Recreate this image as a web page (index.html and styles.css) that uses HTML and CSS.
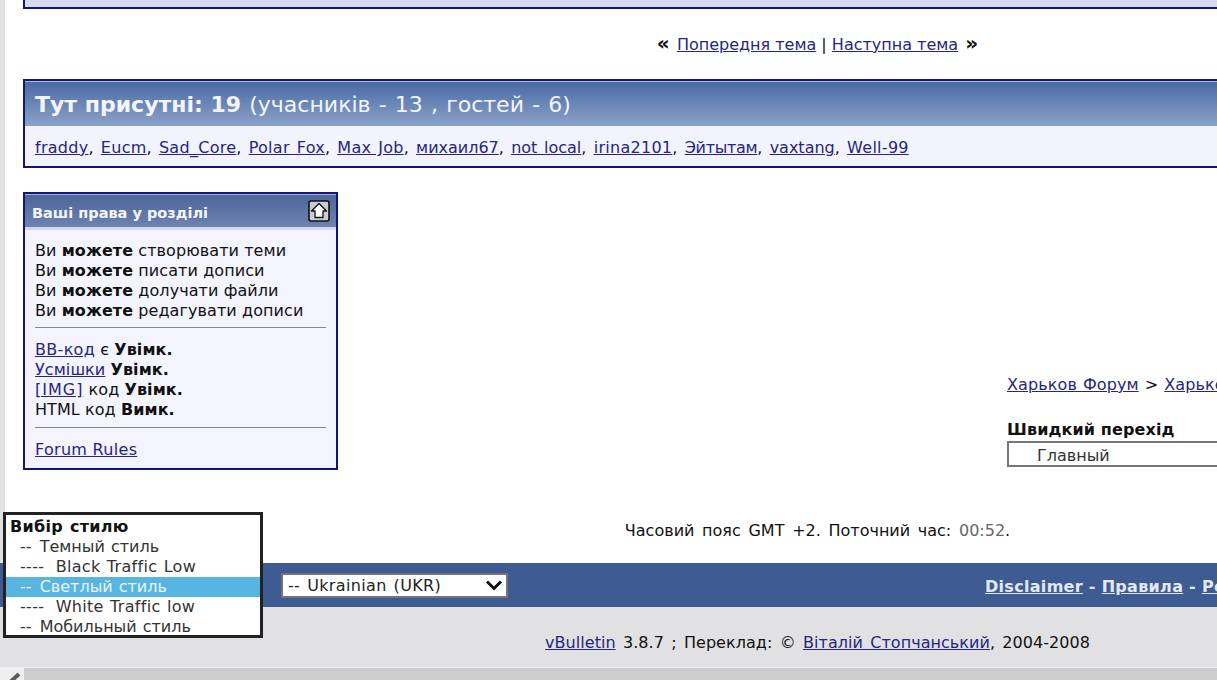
FILE: index.html
```html
<!DOCTYPE html>
<html lang="uk">
<head>
<meta charset="utf-8">
<title>Харьков Форум</title>
<link rel="stylesheet" href="styles.css">
</head>
<body>
<div class="viewport">
  <div class="sheet">
    <div class="top-box"></div>
    <div class="thread-nav"><b class="quote">«</b> <a href="#">Попередня тема</a> | <a href="#">Наступна тема</a> <b class="quote">»</b></div>

    <section class="online">
      <h2 class="online-head"><b>Тут присутні: 19</b> (учасників - 13 , гостей - 6)</h2>
      <div class="online-body"><a href="#">fraddy</a>, <a href="#">Eucm</a>, <a href="#">Sad_Core</a>, <a href="#">Polar Fox</a>, <a href="#">Max Job</a>, <a href="#" class="cyr">михаил67</a>, <a href="#" class="cyr">not local</a>, <a href="#">irina2101</a>, <a href="#" class="cyr-tight">Эйтытам</a>, <a href="#" class="cyr">vaxtang</a>, <a href="#">Well-99</a></div>
    </section>

    <div class="columns">
      <section class="rights">
        <div class="rights-head">
          <span class="rights-title">Ваші права у розділі</span>
          <svg class="collapse" width="22" height="22" viewBox="0 0 22 22" aria-hidden="true">
            <rect x="1" y="1" width="20" height="20" rx="2" fill="#c9ccd4" stroke="#111" stroke-width="1.6"/>
            <path d="M11 3.500 L18.500 11 H15 V17.500 H7 V11 H3.500 Z" fill="#fff" stroke="#111" stroke-width="1.3" stroke-linejoin="round"/>
          </svg>
        </div>
        <div class="rights-body">
          <div>Ви <b>можете</b> створювати теми</div>
          <div>Ви <b>можете</b> писати дописи</div>
          <div>Ви <b>можете</b> долучати файли</div>
          <div>Ви <b>можете</b> редагувати дописи</div>
          <hr class="rule-first">
          <div><a href="#" class="latin">BB-код</a> є <b>Увімк.</b></div>
          <div><a href="#">Усмішки</a> <b>Увімк.</b></div>
          <div><a href="#" class="latin-wide">[IMG]</a> код <b>Увімк.</b></div>
          <div>HTML код <b>Вимк.</b></div>
          <hr class="rule-second">
          <div><a href="#" class="latin">Forum Rules</a></div>
        </div>
      </section>
      <div class="side">
        <div class="crumbs"><a href="#">Харьков Форум</a> &gt; <a href="#">Харьков</a></div>
        <div class="jump-title">Швидкий перехід</div>
        <div class="jump-select">Главный</div>
      </div>
    </div>

    <div class="timezone">Часовий пояс GMT +2. Поточний час: <span class="time">00:52</span>.</div>

    <div class="footer-bar">
      <div class="lang-select"><span class="lang-text">-- Ukrainian (UKR)</span>
        <svg width="18" height="12" viewBox="0 0 18 12" aria-hidden="true"><path d="M2 2.500 L9 9.500 L16 2.500" fill="none" stroke="#111" stroke-width="3"/></svg>
      </div>
      <div class="footer-links"><a href="#">Disclaimer</a> - <a href="#">Правила</a> - <a href="#">Реклама</a></div>
    </div>
    <div class="copyright"><a href="#">vBulletin</a> 3.8.7 ; Переклад: © <a href="#">Віталій Стопчанський</a>, 2004-2008</div>
  </div>

  <div class="style-menu">
    <div class="opt head">Вибір стилю</div>
    <div class="opt sub"><span class="dash">--</span> Темный стиль</div>
    <div class="opt sub latin"><span class="dash long">----</span> Black Traffic Low</div>
    <div class="opt sub active"><span class="dash">--</span> Светлый стиль</div>
    <div class="opt sub latin"><span class="dash long">----</span> White Traffic low</div>
    <div class="opt sub"><span class="dash">--</span> Мобильный стиль</div>
  </div>

  <div class="scrollbar">
    <div class="scroll-btn"><svg width="24" height="13" viewBox="0 0 24 13" aria-hidden="true"><path d="M19 4 L8 14" fill="none" stroke="#5c5c5c" stroke-width="4"/></svg></div>
  </div>
</div>
</body>
</html>
```
FILE: styles.css
```css
* { box-sizing: border-box; }
html, body { margin: 0; padding: 0; height: 100%; overflow: hidden; }
body { font-family: "DejaVu Sans", Verdana, sans-serif; font-size: 16px; color: #111; background: #e1e1e3; }
a { color: #262680; text-decoration: underline; }
.viewport { position: relative; width: 1217px; height: 680px; overflow: hidden; display: flex; flex-direction: column; }
.sheet { flex: 1; min-height: 0; margin-left: 5px; width: 1607px; background: #fff; display: flex; flex-direction: column; }
.top-box { margin-left: 18px; width: 1589px; height: 9px; background: #d6dae9; border: 2px solid #14147a; border-top: 0; }
.thread-nav { margin-left: 18px; width: 1589px; margin-top: 24px; height: 20px; line-height: 20px; text-align: center; }
.quote { font-size: 20px; line-height: 20px; margin: 0 2px; }
.online { margin: 26px 0 0 18px; width: 1589px; height: 89px; border: 2px solid #14147a; background: #f2f3fd; }
.online-head { margin: 0; height: 45px; padding: 0 10px; font-size: 22px; font-weight: normal; line-height: 45px; word-spacing: 1.2px; color: #f3f5fb; background: linear-gradient(#4a6aa5, #8ba3c9); border-top: 1px solid #a8b8dc; }
.online-head b { word-spacing: 0; }
.online-body { padding: 10px 10px 0; line-height: 24px; letter-spacing: .28px; word-spacing: 1.6px; }
.online-body .cyr { letter-spacing: 0; }
.online-body .cyr-tight { letter-spacing: -.3px; }
.columns { margin: 24px 0 0 18px; display: flex; align-items: flex-start; width: 1589px; }
.rights { width: 315px; height: 278px; border: 2px solid #14147a; background: #f3f4fe; }
.rights-head { height: 36px; padding: 0 6px 0 7px; display: flex; align-items: center; justify-content: space-between; color: #f4f5fa; font-weight: bold; font-size: 14.5px; background: linear-gradient(#4c6599, #6d83b0); border-top: 1px solid #a4b2d6; border-bottom: 3px solid #d3d8ee; }
.rights-title { padding-top: 3px; }
.rights-body { padding: 11px 10px 0; line-height: 20px; letter-spacing: .08px; }
.rights-body hr { height: 1px; border: 0; background: #888; }
.rights-body .rule-first { margin: 6px 0 12px; }
.rights-body .rule-second { margin: 7px 0 12px; }
.latin { letter-spacing: .3px; }
.latin-wide { letter-spacing: 1px; }
.side { margin-left: 669px; padding-top: 181px; white-space: nowrap; }
.crumbs { height: 24px; line-height: 24px; letter-spacing: .1px; word-spacing: .8px; }
.jump-title { margin-top: 23px; height: 20px; line-height: 20px; font-weight: bold; letter-spacing: .12px; }
.jump-select { margin-top: 1px; width: 300px; height: 26px; line-height: 20px; padding: 3px 0 0 28px; border: 2px solid #777; color: #333; }
.timezone { margin: 51px 0 0 18px; width: 1589px; height: 20px; line-height: 20px; text-align: center; word-spacing: 2.6px; }
.time { color: #666; }
.footer-bar { margin-top: 22px; height: 44px; margin-left: -5px; padding-left: 281px; display: flex; align-items: center; background: #3e5c92; position: relative; width: 1612px; }
.lang-select { width: 227px; height: 25px; display: flex; align-items: center; justify-content: space-between; padding: 0 3px 0 5px; background: #fff; border: 2px solid #72757d; color: #222; }
.lang-text { padding-top: 1px; letter-spacing: .35px; word-spacing: 1.5px; }
.footer-links { margin-left: 477px; padding-top: 2px; color: #e4e8f2; font-weight: bold; white-space: nowrap; letter-spacing: .3px; }
.footer-links a { color: #e4e8f2; }
.copyright { flex: 1; margin-left: -5px; width: 1612px; text-align: center; padding: 26px 0 0 23px; line-height: 20px; background: #e1e1e3; word-spacing: 2.2px; letter-spacing: .04px; }
.style-menu { position: absolute; left: 3px; top: 512px; width: 260px; height: 126px; padding: 2px 0 0; background: #fff; border: 3px solid #222; overflow: hidden; line-height: 20px; color: #333; word-spacing: 1px; }
.opt { height: 20px; white-space: nowrap; padding-left: 4px; }
.opt.sub { padding-left: 14px; }
.opt.head { font-weight: bold; color: #111; letter-spacing: .3px; }
.opt.active { background: #58b4e0; color: #eaf6fc; }
.dash { margin-right: 2px; }
.dash.long { margin-right: 5px; }
.scrollbar { flex: none; height: 13px; background: #cdcdcd; border-top: 1px solid #f0f0f0; display: flex; }
.scroll-btn { width: 24px; height: 12px; background: #efefef; overflow: hidden; }
```
